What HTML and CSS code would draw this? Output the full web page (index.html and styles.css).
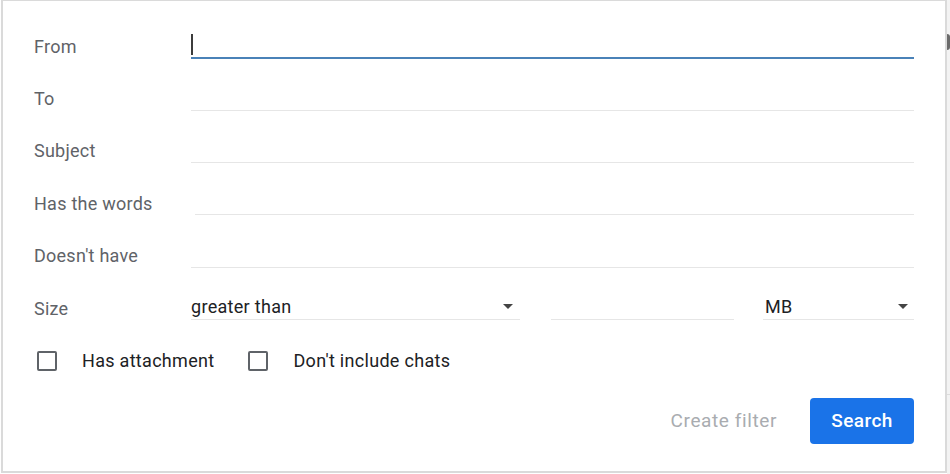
FILE: index.html
```html
<!DOCTYPE html>
<html lang="en">
<head>
<meta charset="utf-8">
<title>Search filter</title>
<link rel="stylesheet" href="styles.css">
</head>
<body>
<div class="page">
  <div class="dialog">
    <div class="row">
      <div class="label">From</div>
      <div class="field focused"><span class="caret"></span></div>
    </div>
    <div class="row">
      <div class="label">To</div>
      <div class="field"></div>
    </div>
    <div class="row">
      <div class="label">Subject</div>
      <div class="field"></div>
    </div>
    <div class="row">
      <div class="label">Has the words</div>
      <div class="field indent"></div>
    </div>
    <div class="row">
      <div class="label">Doesn't have</div>
      <div class="field"></div>
    </div>
    <div class="row">
      <div class="label">Size</div>
      <div class="size-group">
        <div class="select sel-op"><span class="sel-text">greater than</span><span class="arrow"></span></div>
        <div class="field num"></div>
        <div class="select sel-unit"><span class="sel-text">MB</span><span class="arrow"></span></div>
      </div>
    </div>
    <div class="row checks">
      <label class="check"><span class="box"></span><span class="check-text">Has attachment</span></label>
      <label class="check"><span class="box"></span><span class="check-text">Don't include chats</span></label>
    </div>
    <div class="actions">
      <span class="create">Create filter</span>
      <span class="search">Search</span>
    </div>
  </div>
  <div class="outside"><span class="peek"></span><span class="rule"></span></div>
</div>
</body>
</html>
```

FILE: styles.css
```css
* { box-sizing: border-box; }
html, body { margin: 0; padding: 0; }
body {
  width: 950px;
  height: 474px;
  overflow: hidden;
  background: #ffffff;
  font-family: Roboto, "Liberation Sans", Arial, sans-serif;
}
.page {
  display: flex;
  height: 474px;
}
.dialog {
  width: 946px;
  height: 473px;
  margin-left: 1px;
  border: 2px solid #dadada;
  border-top-width: 1px;
  background: #ffffff;
  padding: 19px 31px 0 31px;
  display: flex;
  flex-direction: column;
}
.outside {
  flex: 1;
  background: #f3f3f3;
  position: relative;
}
.peek {
  position: absolute;
  left: 0;
  top: 34px;
  width: 3px;
  height: 16px;
  border-radius: 0 3px 3px 0;
  background: #6b6b6b;
}
.rule {
  position: absolute;
  left: 0;
  right: 0;
  top: 394px;
  height: 1px;
  background: #dcdcdc;
}
.row {
  height: 52.4px;
  display: flex;
  align-items: center;
}
.label {
  width: 157px;
  flex: none;
  font-size: 18px;
  color: #5f6368;
  letter-spacing: 0.25px;
}
.field {
  flex: 1;
  height: 24px;
  border-bottom: 1px solid #e6e6e6;
  display: flex;
  align-items: flex-end;
}
.field.indent { margin-left: 4px; }
.field.focused {
  border-bottom: 2px solid #4a82b8;
  height: 25px;
  margin-top: 1px;
}
.caret {
  width: 2px;
  height: 21px;
  margin-bottom: 2px;
  background: #3c3c3c;
}
.size-group {
  flex: 1;
  display: flex;
  align-items: center;
}
.select {
  height: 24px;
  border-bottom: 1px solid #e6e6e6;
  display: flex;
  align-items: center;
  justify-content: space-between;
  padding-bottom: 2px;
}
.sel-op { width: 329px; padding-right: 7px; }
.sel-unit { width: 151px; padding-left: 2px; padding-right: 6px; }
.field.num { flex: none; width: 183px; margin: 0 29px 0 31px; }
.sel-text {
  font-size: 18px;
  letter-spacing: 0.3px;
  color: #202124;
}
.arrow {
  width: 0;
  height: 0;
  border-left: 5px solid transparent;
  border-right: 5px solid transparent;
  border-top: 5px solid #444;
}
.checks {
  padding-left: 3px;
}
.check {
  display: flex;
  align-items: center;
}
.check + .check { margin-left: 34px; }
.box {
  width: 20px;
  height: 20px;
  border: 2px solid #5f6368;
  border-radius: 2px;
  margin-right: 25px;
}
.check-text {
  font-size: 18px;
  letter-spacing: 0.3px;
  color: #202124;
}
.actions {
  margin-top: 11px;
  display: flex;
  justify-content: flex-end;
  align-items: center;
}
.create {
  font-size: 19px;
  color: #a9acb0;
  margin-right: 33px;
  letter-spacing: 0.6px;
}
.search {
  width: 104px;
  height: 46px;
  border-radius: 4px;
  background: #1a73e8;
  color: #ffffff;
  font-size: 19px;
  font-weight: 500;
  letter-spacing: 0.4px;
  display: flex;
  align-items: center;
  justify-content: center;
}
```
